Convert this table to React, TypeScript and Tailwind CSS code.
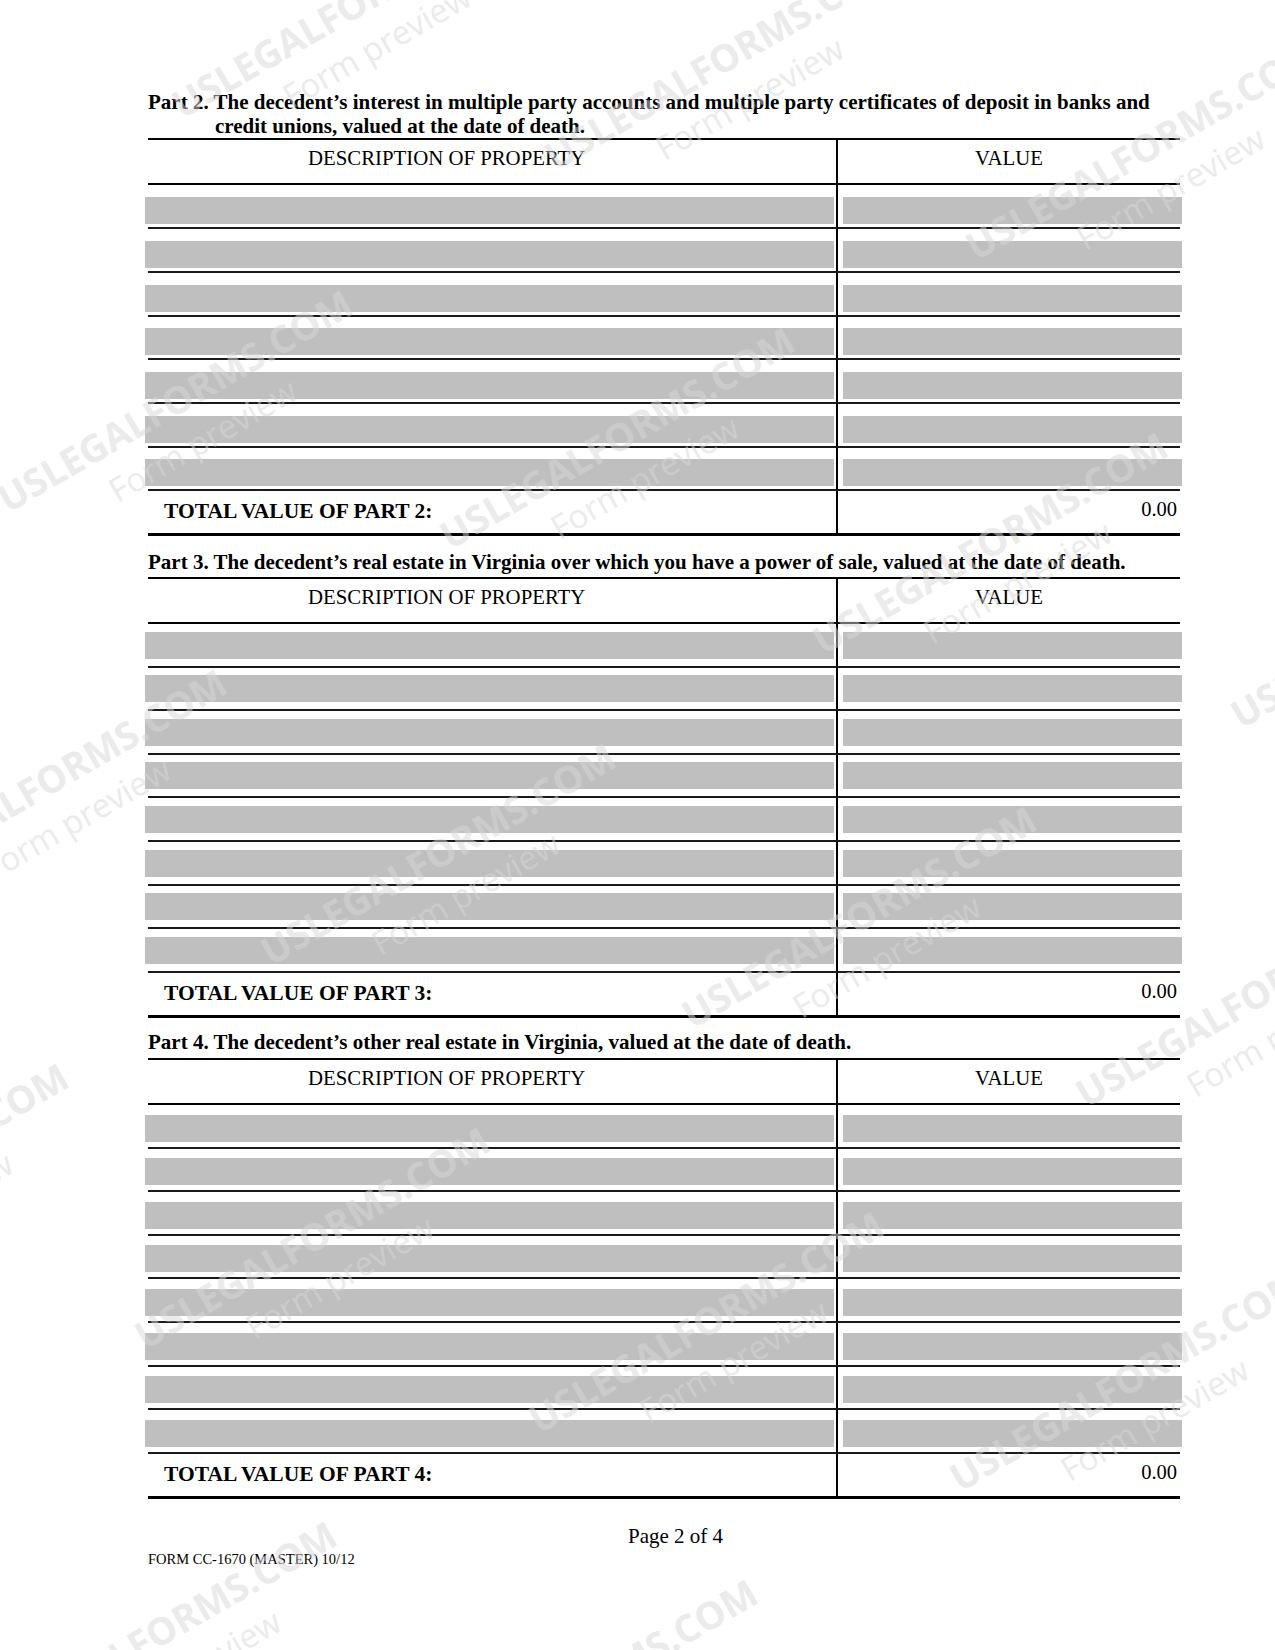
import clsx from 'clsx'

// watermark anchors (top-left of the rotated block)
const watermarks = [
  'left-[165px] top-[90px]',
  'left-[538px] top-[142px]',
  'left-[959px] top-[232px]',
  'left-[-9px] top-[484px]',
  'left-[433px] top-[521px]',
  'left-[806px] top-[626px]',
  'left-[-135px] top-[863px]',
  'left-[1224px] top-[700px]',
  'left-[254px] top-[937px]',
  'left-[675px] top-[1000px]',
  'left-[1069px] top-[1079px]',
  'left-[-293px] top-[1257px]',
  'left-[128px] top-[1321px]',
  'left-[522px] top-[1405px]',
  'left-[943px] top-[1463px]',
  'left-[-25px] top-[1715px]',
  'left-[396px] top-[1773px]'
]

function Watermark({ pos }: { pos: string }) {
  return (
    <div
      className={clsx(
        'pointer-events-none absolute origin-top-left rotate-[-30deg] whitespace-nowrap text-[#d8d8d8] opacity-50',
        pos
      )}
      style={{ fontFamily: '"Open Sans", sans-serif' }}
    >
      <div className="text-[38px] font-bold leading-none">USLEGALFORMS.COM</div>
      <div className="ml-[100px] mt-[13px] text-[33px] font-normal leading-none">Form preview</div>
    </div>
  )
}

function FillRow({ short, gap }: { short?: boolean; gap: string }) {
  return (
    <div
      className={clsx(
        'grid grid-cols-[688px_1fr] border-b-2 border-[#1a1a1a]',
        short ? 'h-[43px]' : 'h-[44px]'
      )}
    >
      <div className={clsx('flex flex-col justify-end', gap)}>
        <div className="-ml-[3px] mr-[2px] h-[27px] bg-[#bfbfbf]" />
      </div>
      <div className={clsx('flex flex-col justify-end border-l-2 border-black', gap)}>
        <div className="-mr-[2px] ml-[5px] h-[27px] bg-[#bfbfbf]" />
      </div>
    </div>
  )
}

interface PartTableProps {
  part: number
  rows: boolean[]
  gap: string
}

function PartTable({ part, rows, gap }: PartTableProps) {
  return (
    <div>
      {/* header */}
      <div className="grid h-[47px] grid-cols-[688px_1fr] border-y-2 border-black text-[20.8px] leading-[24px]">
        <div className="pl-[160px] pt-[6px]">DESCRIPTION OF PROPERTY</div>
        <div className="border-l-2 border-black pt-[6px] text-center">VALUE</div>
      </div>

      {rows.map((short, i) => (
        <FillRow key={i} short={short} gap={gap} />
      ))}

      {/* total */}
      <div className="grid h-[45px] grid-cols-[688px_1fr] border-b-[3px] border-black leading-[24px]">
        <div className="pl-[16px] pt-[8px] text-[21.5px] font-bold">TOTAL VALUE OF PART {part}:</div>
        <div className="border-l-2 border-black pr-[3px] pt-[6px] text-right text-[20.5px]">0.00</div>
      </div>
    </div>
  )
}

export default function App() {
  return (
    <div
      className="relative h-[1650px] w-[1275px] overflow-hidden bg-white text-black"
      style={{ fontFamily: '"Liberation Serif", "Times New Roman", serif' }}
    >
      <div className="w-[1180px] pl-[148px] pt-[90px]">
        {/* Part 2 */}
        <div className="text-[21px] font-bold leading-[24px]">
          <div>
            Part 2. The decedent’s interest in multiple party accounts and multiple party certificates of
            deposit in banks and
          </div>
          <div className="pl-[67px]">credit unions, valued at the date of death.</div>
        </div>
        <PartTable part={2} gap="pb-[3px]" rows={[false, false, false, true, false, false, true]} />

        {/* Part 3 */}
        <div className="mb-[3px] mt-[14px] text-[21px] font-bold leading-[24px]">
          Part 3. The decedent’s real estate in Virginia over which you have a power of sale, valued at the date
          of death.
        </div>
        <PartTable part={3} gap="pb-[7px]" rows={[false, true, false, true, false, false, true, false]} />

        {/* Part 4 */}
        <div className="mb-[4px] mt-[12px] text-[21px] font-bold leading-[24px]">
          Part 4. The decedent’s other real estate in Virginia, valued at the date of death.
        </div>
        <PartTable part={4} gap="pb-[5px]" rows={[false, true, false, true, false, false, true, false]} />

        {/* footer */}
        <div className="ml-[480px] mt-[25px] text-[21px] leading-[24px]">Page 2 of 4</div>
        <div className="mt-[3px] text-[14.5px] leading-[16px]">FORM CC-1670 (MASTER) 10/12</div>
      </div>

      {watermarks.map((pos, i) => (
        <Watermark key={i} pos={pos} />
      ))}
    </div>
  )
}
